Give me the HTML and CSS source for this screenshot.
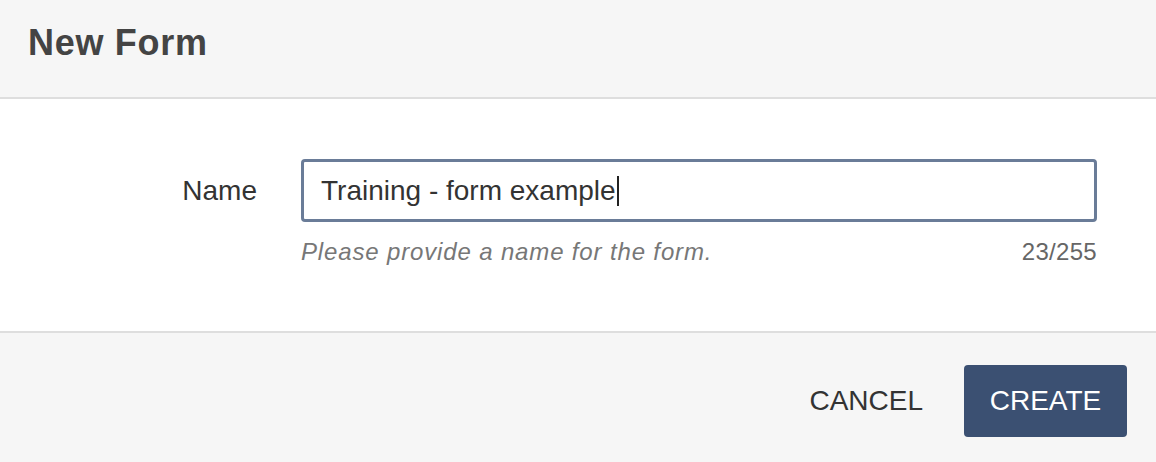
FILE: index.html
```html
<!DOCTYPE html>
<html lang="en">
<head>
<meta charset="utf-8">
<title>New Form</title>
<link rel="stylesheet" href="styles.css">
</head>
<body>
<div class="dialog">
  <header class="dialog-header">
    <h1 class="dialog-title">New Form</h1>
  </header>
  <main class="dialog-body">
    <div class="field">
      <label class="field-label" for="name">Name</label>
      <div class="field-control">
        <div class="text-input" id="name" role="textbox"><span class="value">Training - form example</span><span class="caret"></span></div>
        <div class="field-help">
          <span class="help-text">Please provide a name for the form.</span>
          <span class="counter">23/255</span>
        </div>
      </div>
    </div>
  </main>
  <footer class="dialog-footer">
    <button class="btn btn-flat" type="button">CANCEL</button>
    <button class="btn btn-primary" type="button">CREATE</button>
  </footer>
</div>
</body>
</html>
```

FILE: styles.css
```css
* { box-sizing: border-box; }

html, body {
  margin: 0;
  padding: 0;
  background: #ffffff;
  font-family: "Liberation Sans", Arial, Helvetica, sans-serif;
  color: #333333;
}

.dialog {
  width: 1156px;
  height: 462px;
  display: flex;
  flex-direction: column;
}

.dialog-header {
  height: 99px;
  background: #f6f6f6;
  border-bottom: 2px solid #dedede;
  padding: 25px 28px 0;
}

.dialog-title {
  margin: 0;
  font-size: 36px;
  line-height: 36px;
  font-weight: bold;
  color: #444444;
  letter-spacing: 0.7px;
}

.dialog-body {
  height: 234px;
  border-bottom: 2px solid #dedede;
  padding: 60px 59px 0 0;
}

.field {
  display: grid;
  grid-template-columns: 257px 1fr;
  column-gap: 44px;
}

.field-label {
  text-align: right;
  font-size: 28px;
  height: 63px;
  display: flex;
  align-items: center;
  justify-content: flex-end;
  color: #333333;
}

.text-input {
  height: 63px;
  border: 3px solid #6a7c98;
  border-radius: 4px;
  padding: 0 17px;
  display: flex;
  align-items: center;
  font-size: 28px;
  color: #333333;
  background: #ffffff;
}

.caret {
  display: inline-block;
  width: 2px;
  height: 30px;
  background: #222222;
  margin-left: 1px;
}

.field-help {
  margin-top: 16px;
  display: flex;
  justify-content: space-between;
  font-size: 24px;
}

.help-text {
  font-style: italic;
  color: #777777;
  letter-spacing: 0.85px;
}

.counter {
  color: #666666;
  letter-spacing: 0.3px;
}

.dialog-footer {
  flex: 1;
  background: #f6f6f6;
  display: flex;
  justify-content: flex-end;
  align-items: flex-start;
  padding: 32px 29px 0 0;
  gap: 21px;
}

.btn {
  height: 72px;
  border: none;
  border-radius: 4px;
  font-family: "Liberation Sans", Arial, Helvetica, sans-serif;
  font-size: 28px;
  padding: 0 25px;
  cursor: pointer;
}

.btn-flat {
  background: transparent;
  color: #333333;
  padding: 0 20px;
}

.btn-primary {
  background: #3b5072;
  color: #ffffff;
  width: 163px;
  padding: 0;
}
```
